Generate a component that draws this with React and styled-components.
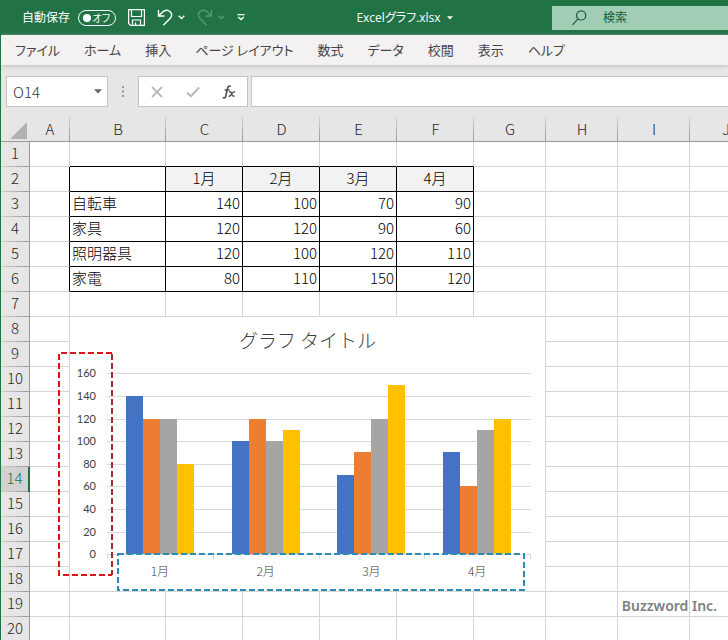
import styled, { createGlobalStyle } from 'styled-components';

const GlobalStyle = createGlobalStyle`
  * {
    box-sizing: border-box;
  }

  body {
    margin: 0;
    background: #fff;
    font-family: 'Noto Sans CJK JP', sans-serif;
    color: #262626;
  }

  button,
  input {
    margin: 0;
    padding: 0;
    border: 0;
    background: none;
    color: inherit;
    font: inherit;
  }
`;

const Window = styled.div`
  height: 100vh;
  display: flex;
  flex-direction: column;
  overflow: hidden;
  border-left: 1px solid #217346;
  background: #e6e6e6;
`;

const TitleBar = styled.header`
  flex: none;
  height: 35px;
  display: flex;
  align-items: center;
  background: #217346;
  color: #fff;
  font-family: 'Open Sans', 'Noto Sans CJK JP', sans-serif;
  font-size: 12px;
  line-height: 16px;
`;

const AutoSave = styled.label`
  display: flex;
  align-items: center;
  gap: 8px;
  padding-left: 21px;
`;

const Toggle = styled.button`
  width: 38px;
  height: 16px;
  display: flex;
  align-items: center;
  justify-content: space-between;
  padding: 0 5px 0 4px;
  border: 1px solid #fff;
  border-radius: 8px;
  font-size: 10px;
  line-height: 14px;
  font-feature-settings: 'palt';

  &::before {
    content: '';
    width: 8px;
    height: 8px;
    border-radius: 50%;
    background: #fff;
  }
`;

const QuickAccess = styled.div`
  display: flex;
  align-items: center;
  padding-left: 12px;
`;

const ToolButton = styled.button`
  display: flex;
  align-items: center;
  gap: 5px;
  margin-right: 12px;
  opacity: ${(props) => (props.disabled ? 0.25 : 1)};
`;

const FileName = styled.button`
  flex: 1;
  display: flex;
  align-items: center;
  justify-content: center;
  gap: 6px;
  font-feature-settings: 'palt';
`;

const SearchBox = styled.label`
  width: 24%;
  min-width: 176px;
  height: 24px;
  display: flex;
  align-items: center;
  gap: 16px;
  padding-left: 20px;
  background: #a0cdb3;
  color: #185c37;

  svg {
    flex: none;
  }

  input {
    flex: 1;
    min-width: 0;
  }

  input::placeholder {
    color: #185c37;
    opacity: 1;
  }
`;

const MenuBar = styled.nav`
  flex: none;
  height: 30px;
  display: flex;
  align-items: center;
  gap: 24px;
  padding-left: 14px;
  background: #f3f1f1;
  box-shadow: 0 1px 4px #bdbdbd;
  color: #444;
  font-size: 13px;
  line-height: 20px;
  white-space: nowrap;
  font-feature-settings: 'palt';
`;

const FormulaBar = styled.div`
  flex: none;
  display: flex;
  align-items: center;
  padding: 11px 0 10px 5px;
`;

const FieldBox = styled.div`
  height: 31px;
  display: flex;
  align-items: center;
  border: 1px solid #c3c3c3;
  background: #fff;
`;

const NameBox = styled(FieldBox)`
  width: 102px;
  padding: 0 5px 0 6px;
  color: #333;
  font-size: 15px;
  font-weight: 300;

  input {
    flex: 1;
    min-width: 0;
  }
`;

const Grip = styled.span`
  width: 30px;
  display: flex;
  justify-content: center;
`;

const FormulaButtons = styled(FieldBox)`
  width: 110px;
  justify-content: space-between;
  padding: 0 11px;
  margin-right: 3px;

  svg {
    display: block;
  }
`;

const FormulaInput = styled(FieldBox).attrs({ as: 'input' })`
  flex: 1;
  min-width: 0;
  padding: 0 6px;
  border: 1px solid #c3c3c3;
  border-right: 0;
  background: #fff;
`;

const Sheet = styled.main`
  position: relative;
  flex: 1;
  overflow: hidden;
`;

const Grid = styled.table`
  width: 100%;
  min-width: 761px;
  table-layout: fixed;
  border-collapse: separate;
  border-spacing: 0;
  background: #fff;
  font-size: 15px;
  line-height: 22px;
`;

const ColumnHead = styled.th`
  height: 25px;
  padding: 0;
  border-bottom: 1px solid #999;
  background:
    linear-gradient(#d0d0d0, #999) right / 1px 100% no-repeat,
    #e6e6e6;
  font-weight: 300;
`;

const Corner = styled(ColumnHead)`
  background: #e6e6e6;

  svg {
    display: block;
    margin: 3px 3px 0 auto;
  }
`;

const RowHead = styled.th`
  height: 25px;
  padding: 0 0 3px;
  border-right: ${(props) => (props.$active ? '2px solid #217346' : '1px solid #999')};
  background:
    linear-gradient(90deg, #d0d0d0, #999) bottom / 100% 1px no-repeat,
    ${(props) => (props.$active ? '#d2d2d2' : '#e6e6e6')};
  color: ${(props) => (props.$active ? '#217346' : 'inherit')};
  font-weight: 300;
`;

const Cell = styled.td`
  height: 25px;
  padding: 0 2px 2px;
  border-right: 1px solid ${(props) => (props.$lineRight ? '#000' : '#d4d4d4')};
  border-bottom: 1px solid ${(props) => (props.$lineBottom ? '#000' : '#d4d4d4')};
  background: ${(props) => (props.$shaded ? '#f2f2f2' : '#fff')};
  color: #000;
  font-weight: 300;
  text-align: ${(props) => props.$align};
  white-space: nowrap;
`;

const ChartArea = styled.figure`
  position: absolute;
  top: 199px;
  left: 68px;
  width: 477px;
  height: 276px;
  margin: 0;
  border: 1px solid #d4d4d4;
  background: #fff;
`;

const ChartTitle = styled.figcaption`
  padding: 9px 0 0;
  color: #404040;
  font-size: 19px;
  font-weight: 300;
  line-height: 28px;
  text-align: center;
`;

const Plot = styled.svg`
  position: absolute;
  top: -1px;
  left: -12px;
  width: 488px;
  height: 276px;
  overflow: visible;
  fill: #404040;
  font-size: 11px;
`;

const Credit = styled.p`
  position: absolute;
  top: 479px;
  right: 11px;
  margin: 0;
  color: #808080;
  font-family: 'Noto Sans', sans-serif;
  font-size: 14px;
  font-weight: 600;
  line-height: 20px;
`;

const menus = ['ファイル', 'ホーム', '挿入', 'ページ レイアウト', '数式', 'データ', '校閲', '表示', 'ヘルプ'];

const columns = [
  { name: 'A', width: 40 },
  { name: 'B', width: 96 },
  { name: 'C', width: 77 },
  { name: 'D', width: 77 },
  { name: 'E', width: 77 },
  { name: 'F', width: 77 },
  { name: 'G', width: 72 },
  { name: 'H', width: 72 },
  { name: 'I', width: 72 },
  { name: 'J', width: 72 },
];

const months = ['1月', '2月', '3月', '4月'];

const products = [
  { name: '自転車', color: '#4472c4', sales: [140, 100, 70, 90] },
  { name: '家具', color: '#ed7d31', sales: [120, 120, 90, 60] },
  { name: '照明器具', color: '#a5a5a5', sales: [120, 100, 120, 110] },
  { name: '家電', color: '#ffc000', sales: [80, 110, 150, 120] },
];

const rows = Array.from({ length: 20 }, (_, i) => i + 1);

const cellText = (row, col) => {
  if (row === 2) return months[col - 2];
  const product = products[row - 3];
  if (!product || col < 1) return null;
  return col === 1 ? product.name : product.sales[col - 2];
};

const inRange = (value, from, to) => value >= from && value <= to;

const Chevron = () => (
  <svg width="7" height="5" viewBox="0 0 7 5" fill="none" stroke="currentColor" strokeWidth="1.4">
    <path d="M0.7 0.8 3.5 3.6 6.3 0.8" />
  </svg>
);

const SaveIcon = () => (
  <svg width="17" height="17" viewBox="0 0 17 17" fill="none" stroke="currentColor" strokeWidth="1.2">
    <path d="M0.6 0.6H16.4V16.4H2.6L0.6 14.4ZM3.5 0.6V7.5H13.5V0.6M4.5 16.4V11H12.5V16.4M7.5 16.4V13.5" />
  </svg>
);

const UndoIcon = ({ flip }) => (
  <svg width="16" height="17" viewBox="0 0 16 17" fill="none" stroke="currentColor" strokeWidth="1.4">
    <path
      d="M1.5 1V7H7.5M1.7 6.8 5.6 3C8.2 0.6 11.4 0.8 13.2 2.8C15.2 5 14.8 7.8 12.8 9.8L6.4 16.2"
      transform={flip ? 'matrix(-1 0 0 1 16 0)' : undefined}
    />
  </svg>
);

const SalesChart = () => {
  const left = 49;
  const right = 472;
  const zero = 238.4;
  const top = 57.2;
  const step = (right - left) / months.length;
  const y = (value) => Math.round(zero - (value * (zero - top)) / 160);

  return (
    <ChartArea>
      <ChartTitle>グラフ タイトル</ChartTitle>
      <Plot viewBox="0 0 488 276" role="img" aria-label="グラフ タイトル">
        {[0, 20, 40, 60, 80, 100, 120, 140, 160].map((value) => (
          <g key={value}>
            <rect x={left} y={y(value)} width={right - left + 1} height="1" fill="#d9d9d9" />
            <text x="38" y={y(value) + 4} textAnchor="end" fontFamily="Lato, sans-serif">
              {value}
            </text>
          </g>
        ))}
        {[0, 1, 2, 3, 4].map((tick) => (
          <rect key={tick} x={Math.round(left + step * tick)} y={y(0)} width="1" height="5" fill="#d9d9d9" />
        ))}
        {months.map((month, i) => (
          <g key={month}>
            {products.map((product, j) => (
              <rect
                key={product.name}
                x={Math.round(left + step * i + (step - 68) / 2) + j * 17}
                y={y(product.sales[i])}
                width="17"
                height={y(0) - y(product.sales[i])}
                fill={product.color}
              />
            ))}
            <text x={left + step * i + step / 2} y="260" textAnchor="middle" fontSize="12" fontWeight="300">
              {month}
            </text>
          </g>
        ))}
        <g fill="none" strokeWidth="2" strokeDasharray="6 3">
          <path d="M54 37H1V259H54" stroke="#dc1414" />
          <path d="M54 38V259" stroke="#a02c2c" />
          <rect x="60" y="238" width="406" height="36" stroke="#2a8db8" />
        </g>
      </Plot>
    </ChartArea>
  );
};

const App = () => {
  return (
    <Window>
      <GlobalStyle />
      <TitleBar>
        <AutoSave>
          自動保存
          <Toggle type="button" role="switch" aria-checked="false">
            オフ
          </Toggle>
        </AutoSave>
        <QuickAccess>
          <ToolButton type="button" aria-label="上書き保存">
            <SaveIcon />
          </ToolButton>
          <ToolButton type="button" aria-label="元に戻す">
            <UndoIcon />
            <Chevron />
          </ToolButton>
          <ToolButton type="button" aria-label="やり直し" disabled>
            <UndoIcon flip />
            <Chevron />
          </ToolButton>
          <ToolButton type="button" aria-label="クイック アクセス ツール バーのユーザー設定">
            <svg width="8" height="7" viewBox="0 0 8 7" fill="none" stroke="currentColor" strokeWidth="1.3">
              <path d="M0.5 0.7H7.5M1.2 3 4 5.6 6.8 3" />
            </svg>
          </ToolButton>
        </QuickAccess>
        <FileName type="button">
          Excelグラフ.xlsx
          <svg width="6" height="4" viewBox="0 0 6 4" fill="currentColor">
            <path d="M0 0.3H6L3 3.5Z" />
          </svg>
        </FileName>
        <SearchBox>
          <svg width="15" height="16" viewBox="0 0 15 16" fill="none" stroke="currentColor" strokeWidth="1.2">
            <circle cx="9.2" cy="5.4" r="4.6" />
            <path d="M6 8.8 0.6 14.8" />
          </svg>
          <input type="search" placeholder="検索" aria-label="検索" />
        </SearchBox>
      </TitleBar>

      <MenuBar>
        {menus.map((menu) => (
          <button key={menu} type="button">
            {menu}
          </button>
        ))}
      </MenuBar>

      <FormulaBar>
        <NameBox>
          <input defaultValue="O14" aria-label="名前ボックス" />
          <svg width="8" height="5" viewBox="0 0 8 5" fill="#666">
            <path d="M0 0.3H8L4 4.6Z" />
          </svg>
        </NameBox>
        <Grip>
          <svg width="2" height="11" viewBox="0 0 2 11" fill="#999">
            <path d="M0 0H2V2H0ZM0 4.5H2V6.5H0ZM0 9H2V11H0Z" />
          </svg>
        </Grip>
        <FormulaButtons>
          <button type="button" aria-label="キャンセル">
            <svg width="14" height="12" viewBox="0 0 14 12" fill="none" stroke="#bbb" strokeWidth="1.8">
              <path d="M2 1 12 11M12 1 2 11" />
            </svg>
          </button>
          <button type="button" aria-label="入力">
            <svg width="14" height="12" viewBox="0 0 14 12" fill="none" stroke="#bbb" strokeWidth="2.2">
              <path d="M1 6.5 5 10.3 13 1.5" />
            </svg>
          </button>
          <button type="button" aria-label="関数の挿入">
            <svg width="14" height="14" viewBox="0 0 14 14" fill="none" stroke="#555" strokeWidth="1.7">
              <path d="M8.8 1.6C7.2 0.4 6 1.2 5.6 3L3.8 11C3.4 12.8 2.2 13.4 0.8 12.6M2.6 5H7.8" />
              <path d="M7.2 7C8.8 6.4 9.4 7.4 9.8 8.8C10.2 10.6 10.8 11.6 12.6 11M13 6.8C11.4 6.6 10 8.4 9.4 9.4C8.8 10.6 8 11.4 6.6 11.2" strokeWidth="1.4" />
            </svg>
          </button>
        </FormulaButtons>
        <FormulaInput aria-label="数式バー" />
      </FormulaBar>

      <Sheet>
        <Grid>
          <colgroup>
            <col style={{ width: 29 }} />
            {columns.map((column) => (
              <col key={column.name} style={{ width: column.width }} />
            ))}
            <col />
          </colgroup>
          <thead>
            <tr>
              <Corner>
                <svg width="17" height="17" viewBox="0 0 17 17" fill="#b2b2b2">
                  <path d="M17 0V17H0Z" />
                </svg>
              </Corner>
              {columns.map((column) => (
                <ColumnHead key={column.name} scope="col">
                  {column.name}
                </ColumnHead>
              ))}
              <ColumnHead />
            </tr>
          </thead>
          <tbody>
            {rows.map((row) => (
              <tr key={row}>
                <RowHead scope="row" $active={row === 14}>
                  {row}
                </RowHead>
                {columns.map((column, col) => (
                  <Cell
                    key={column.name}
                    $lineRight={inRange(row, 2, 6) && inRange(col, 0, 5)}
                    $lineBottom={inRange(row, 1, 6) && inRange(col, 1, 5)}
                    $shaded={row === 2 && inRange(col, 2, 5)}
                    $align={row === 2 ? 'center' : col === 1 ? 'left' : 'right'}
                  >
                    {cellText(row, col)}
                  </Cell>
                ))}
                <Cell />
              </tr>
            ))}
          </tbody>
        </Grid>
        <SalesChart />
        <Credit>Buzzword Inc.</Credit>
      </Sheet>
    </Window>
  );
};

export default App;
